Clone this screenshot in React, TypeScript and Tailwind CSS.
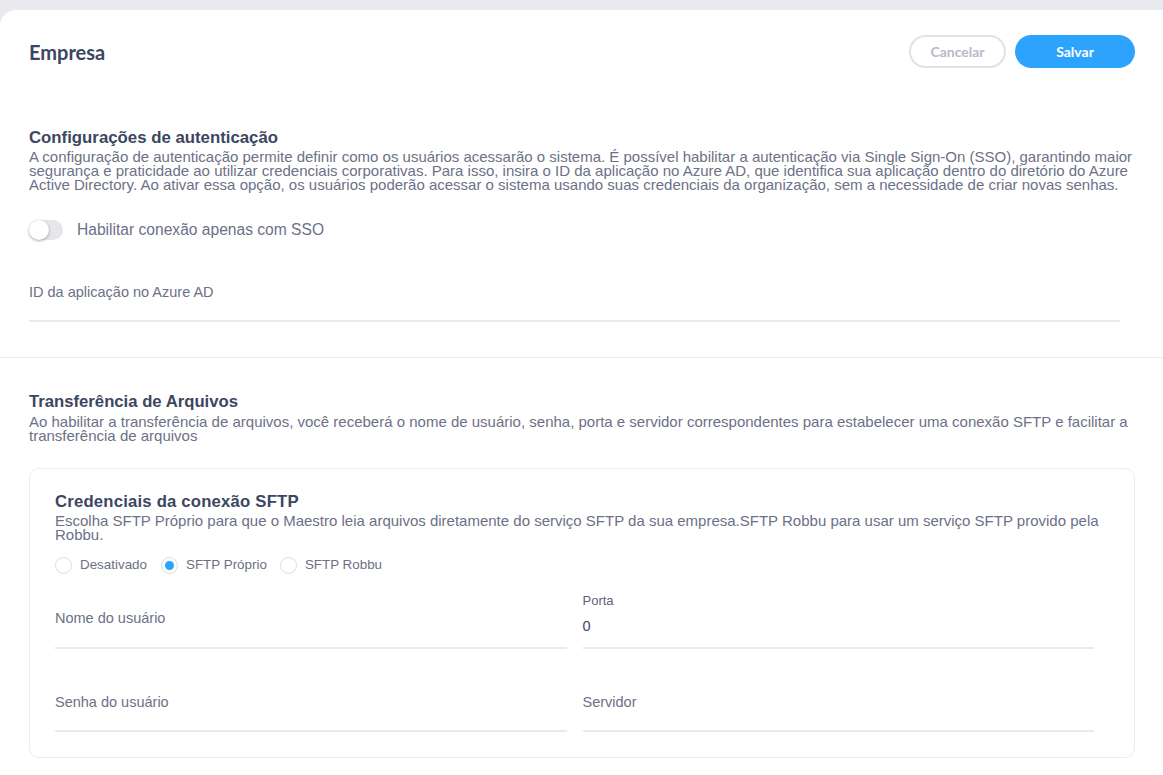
export default function App() {
  const body = { fontFamily: '"Liberation Sans", Arial, sans-serif' };
  const display = { fontFamily: 'Lato, "Open Sans", sans-serif' };

  return (
    <div className="min-h-screen bg-[#e9eaf0] pt-[10px]" style={body}>
      <div className="bg-white rounded-tl-[16px] min-h-[765px]">
        {/* Header */}
        <div className="flex items-center justify-between pl-[29px] pr-[28px] pt-[25px]">
          <h1 className="text-[20px] font-bold text-[#3c4662]" style={display}>
            Empresa
          </h1>
          <div className="flex gap-[9px]">
            <button
              className="w-[97px] h-[33px] rounded-full border-2 border-[#e1e2e8] text-[14px] font-bold text-[#b6b9c6]"
              style={display}
            >
              Cancelar
            </button>
            <button
              className="w-[120px] h-[33px] rounded-full bg-[#2ca4fd] text-[14px] font-bold text-white"
              style={display}
            >
              Salvar
            </button>
          </div>
        </div>

        {/* Autenticação */}
        <section className="pl-[29px] pr-[15px] pt-[60px]">
          <h2 className="text-[16.8px] font-bold text-[#3c4662] leading-[20px]">
            Configurações de autenticação
          </h2>
          <p className="text-[15px] leading-[14px] text-[#6c7186] mt-[2px]">
            A configuração de autenticação permite definir como os usuários acessarão o sistema. É possível habilitar a
            autenticação via Single Sign-On (SSO), garantindo maior segurança e praticidade ao utilizar credenciais
            corporativas. Para isso, insira o ID da aplicação no Azure AD, que identifica sua aplicação dentro do
            diretório do Azure Active Directory. Ao ativar essa opção, os usuários poderão acessar o sistema usando suas
            credenciais da organização, sem a necessidade de criar novas senhas.
          </p>

          <div className="flex items-center gap-[14px] mt-[26px]">
            <div className="relative w-[34px] h-[20px] rounded-full bg-[#e6e7ec]">
              <div className="absolute left-0 top-0 w-[20px] h-[20px] rounded-full bg-white shadow-[0_1px_3px_rgba(0,0,0,0.35)]" />
            </div>
            <span className="text-[15.6px] text-[#6c7186]">Habilitar conexão apenas com SSO</span>
          </div>

          <div className="mt-[42px] w-[1091px]">
            <div className="text-[14.5px] text-[#6c7186] leading-[18px]">ID da aplicação no Azure AD</div>
            <div className="mt-[19px] h-[2px] bg-[#e9eaf0]" />
          </div>
        </section>

        <div className="mt-[35px] h-px bg-[#ebebef]" />

        {/* Transferência */}
        <section className="pl-[29px] pr-[28px] pt-[34px] pb-[17px]">
          <h2 className="text-[16.7px] font-bold text-[#3c4662] leading-[20px]">Transferência de Arquivos</h2>
          <p className="text-[15px] leading-[14px] text-[#6c7186] mt-[3px] -mr-[14px]">
            Ao habilitar a transferência de arquivos, você receberá o nome de usuário, senha, porta e servidor
            correspondentes para estabelecer uma conexão SFTP e facilitar a transferência de arquivos
          </p>

          <div className="mt-[25px] border border-[#ebebef] rounded-[10px] pl-[25px] pr-[40px] pt-[23px] pb-[25px]">
            <h3 className="text-[16.7px] font-bold text-[#3c4662] leading-[20px] tracking-[0.2px]">
              Credenciais da conexão SFTP
            </h3>
            <p className="text-[15px] leading-[14px] text-[#6c7186] mt-[2px] -mr-[16px]">
              Escolha SFTP Próprio para que o Maestro leia arquivos diretamente do serviço SFTP da sua empresa.SFTP Robbu
              para usar um serviço SFTP provido pela Robbu.
            </p>

            <div className="flex items-center mt-[13px] text-[13.4px] text-[#6c7186]">
              <label className="flex items-center gap-[8px] mr-[14px]">
                <span className="w-[17px] h-[17px] rounded-full border border-[#dcdde3]" />
                Desativado
              </label>
              <label className="flex items-center gap-[8px] mr-[13px]">
                <span className="w-[17px] h-[17px] rounded-full border border-[#dcdde3] flex items-center justify-center">
                  <span className="w-[9px] h-[9px] rounded-full bg-[#2ca4fd]" />
                </span>
                SFTP Próprio
              </label>
              <label className="flex items-center gap-[8px]">
                <span className="w-[17px] h-[17px] rounded-full border border-[#dcdde3]" />
                SFTP Robbu
              </label>
            </div>

            <div className="grid grid-cols-2 gap-x-[16px] mt-[17px]">
              <div className="flex flex-col justify-end">
                <div className="text-[14.5px] text-[#6c7186] leading-[18px]">Nome do usuário</div>
                <div className="mt-[20px] h-[2px] bg-[#e9eaf0]" />
              </div>
              <div className="flex flex-col justify-end">
                <div className="text-[13px] text-[#5c6278] leading-[16px]">Porta</div>
                <div className="text-[14.5px] text-[#3c4662] leading-[18px] mt-[8px]">0</div>
                <div className="mt-[12px] h-[2px] bg-[#e9eaf0]" />
              </div>
              <div className="mt-[44px]">
                <div className="text-[14.5px] text-[#6c7186] leading-[18px]">Senha do usuário</div>
                <div className="mt-[19px] h-[2px] bg-[#e9eaf0]" />
              </div>
              <div className="mt-[44px]">
                <div className="text-[14.5px] text-[#6c7186] leading-[18px]">Servidor</div>
                <div className="mt-[19px] h-[2px] bg-[#e9eaf0]" />
              </div>
            </div>
          </div>
        </section>
      </div>
    </div>
  );
}
